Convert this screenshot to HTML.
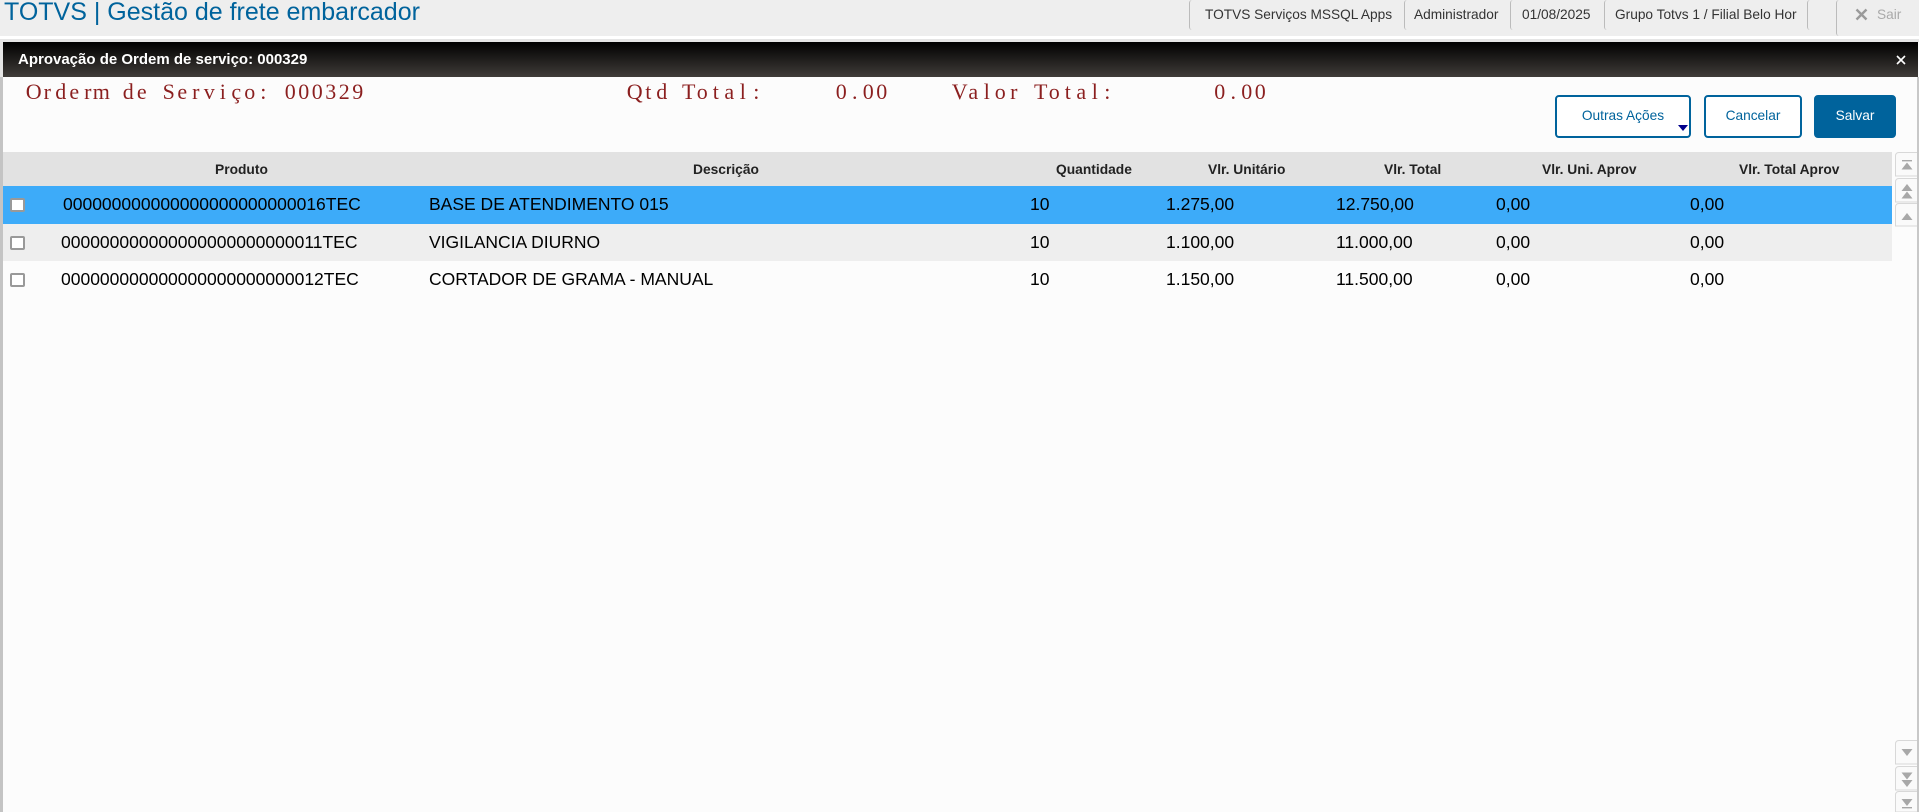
<!DOCTYPE html>
<html lang="pt-BR">
<head>
<meta charset="utf-8">
<title>TOTVS | Gestão de frete embarcador</title>
<style>
html,body{margin:0;padding:0;width:1919px;height:812px;overflow:hidden;background:#fcfcfc;font-family:"Liberation Sans",sans-serif;}
.a{position:absolute;white-space:nowrap;}
.b{position:absolute;}
.nav{font-size:13.7px;color:#333;top:7px;line-height:16px;}
.div{position:absolute;top:0;width:6px;height:30px;border-left:1px solid #bbb;border-radius:5px;box-sizing:border-box;}
.th{font-weight:bold;font-size:13.8px;color:#222;top:162px;line-height:16px;}
.td{font-size:17.5px;color:#000;line-height:20px;}
.cb{position:absolute;left:10px;width:15px;height:14px;box-sizing:border-box;background:#fff;border:2px solid #999;border-radius:2px;}
.btn{position:absolute;top:95px;height:43px;box-sizing:border-box;border:2px solid #00639c;border-radius:4px;background:#fff;color:#00639c;font-size:13.7px;line-height:38px;text-align:center;}
</style>
</head>
<body>
<div class="b" style="left:0;top:0;width:1919px;height:36px;background:#eee;"></div>
<div class="b" style="left:0;top:36px;width:1919px;height:3px;background:#fff;"></div>
<div class="b" style="left:0;top:39px;width:1919px;height:3px;background:#e5e5e5;"></div>
<div class="b" style="left:0;top:42px;width:3px;height:35px;background:#e5e5e5;"></div>
<div class="b" style="left:0;top:77px;width:3px;height:735px;background:#c4c4c4;"></div>
<div class="b" style="left:1917px;top:77px;width:2px;height:735px;background:#c8c8c8;"></div>

<div class="a" style="left:4px;top:-2.5px;font-size:25px;line-height:28px;color:#00639c;">TOTVS | Gestão de frete embarcador</div>

<div class="div" style="left:1189px;"></div>
<div class="a nav" style="left:1205px;">TOTVS Serviços MSSQL Apps</div>
<div class="div" style="left:1404px;"></div>
<div class="a nav" style="left:1414px;">Administrador</div>
<div class="div" style="left:1510px;"></div>
<div class="a nav" style="left:1522px;">01/08/2025</div>
<div class="div" style="left:1604px;"></div>
<div class="a nav" style="left:1615px;">Grupo Totvs 1 / Filial Belo Hor</div>
<div class="div" style="left:1807px;"></div>
<div class="div" style="left:1836px;height:36px;"></div>
<svg class="b" style="left:1855px;top:8px;" width="13" height="13" viewBox="0 0 13 13"><path d="M1.5 1.5L11.5 11.5M11.5 1.5L1.5 11.5" stroke="#9a9a9a" stroke-width="2.4" fill="none"/></svg>
<div class="a nav" style="left:1877px;color:#aaa;">Sair</div>

<div class="b" style="left:3px;top:42px;width:1915px;height:35px;background:linear-gradient(#000,#403c39);"></div>
<div class="a" style="left:18px;top:52px;font-size:15px;font-weight:bold;line-height:16px;color:#fff;">Aprovação de Ordem de serviço: 000329</div>
<svg class="b" style="left:1896px;top:55px;" width="10" height="10" viewBox="0 0 10 10"><path d="M1 1L9 9M9 1L1 9" stroke="#fff" stroke-width="1.6" fill="none"/></svg>

<svg class="b" style="left:0;top:75px;" width="1300" height="36" viewBox="0 75 1300 36">
<g font-family="'Liberation Serif',serif" font-size="22" fill="#8b1f1f" text-anchor="middle">
<text y="99" x="33.75 47.25 60.75 74.25 87.75 101.25 114.75 128.25 141.75 155.25 168.75 182.25 195.75 209.25 222.75 236.25 249.75 263.25 276.75 290.25 303.75 317.25 330.75 344.25 357.75">Orderm de Serviço: 000329</text>
<text y="99" x="634.75 648.25 661.75 675.25 688.75 702.25 715.75 729.25 742.75 756.25">Qtd Total:</text>
<text y="99" x="841.25 854.75 868.25 881.75">0.00</text>
<text y="99" x="959.75 973.25 986.75 1000.25 1013.75 1027.25 1040.75 1054.25 1067.75 1081.25 1094.75 1107.25">Valor Total:</text>
<text y="99" x="1219.75 1233.25 1246.75 1260.25">0.00</text>
</g>
</svg>

<div class="btn" style="left:1555px;width:136px;">Outras Ações</div>
<svg class="b" style="left:1678px;top:125px;" width="10" height="6" viewBox="0 0 10 6"><path d="M0 0H10L5 6Z" fill="#00008b"/></svg>
<div class="btn" style="left:1704px;width:98px;">Cancelar</div>
<div class="btn" style="left:1814px;width:82px;background:#00639c;color:#fff;">Salvar</div>

<div class="b" style="left:3px;top:152px;width:1889px;height:34px;background:#e2e2e2;"></div>
<div class="b" style="left:3px;top:186px;width:1889px;height:38px;background:#3dabf9;"></div>
<div class="b" style="left:3px;top:224px;width:1889px;height:37px;background:#eee;"></div>

<div class="a th" style="left:215px;">Produto</div>
<div class="a th" style="left:693px;">Descrição</div>
<div class="a th" style="left:1056px;">Quantidade</div>
<div class="a th" style="left:1208px;">Vlr. Unitário</div>
<div class="a th" style="left:1384px;">Vlr. Total</div>
<div class="a th" style="left:1542px;">Vlr. Uni. Aprov</div>
<div class="a th" style="left:1739px;">Vlr. Total Aprov</div>

<div class="cb" style="top:198px;"></div>
<div class="a td" style="left:63px;top:194px;">000000000000000000000000016TEC</div>
<div class="a td" style="left:429px;top:194px;">BASE DE ATENDIMENTO 015</div>
<div class="a td" style="left:1030px;top:194px;">10</div>
<div class="a td" style="left:1166px;top:194px;">1.275,00</div>
<div class="a td" style="left:1336px;top:194px;">12.750,00</div>
<div class="a td" style="left:1496px;top:194px;">0,00</div>
<div class="a td" style="left:1690px;top:194px;">0,00</div>

<div class="cb" style="top:236px;"></div>
<div class="a td" style="left:61px;top:232px;">000000000000000000000000011TEC</div>
<div class="a td" style="left:429px;top:232px;">VIGILANCIA DIURNO</div>
<div class="a td" style="left:1030px;top:232px;">10</div>
<div class="a td" style="left:1166px;top:232px;">1.100,00</div>
<div class="a td" style="left:1336px;top:232px;">11.000,00</div>
<div class="a td" style="left:1496px;top:232px;">0,00</div>
<div class="a td" style="left:1690px;top:232px;">0,00</div>

<div class="cb" style="top:273px;"></div>
<div class="a td" style="left:61px;top:269px;">000000000000000000000000012TEC</div>
<div class="a td" style="left:429px;top:269px;">CORTADOR DE GRAMA - MANUAL</div>
<div class="a td" style="left:1030px;top:269px;">10</div>
<div class="a td" style="left:1166px;top:269px;">1.150,00</div>
<div class="a td" style="left:1336px;top:269px;">11.500,00</div>
<div class="a td" style="left:1496px;top:269px;">0,00</div>
<div class="a td" style="left:1690px;top:269px;">0,00</div>

<svg class="b" style="left:0;top:0;" width="1919" height="812" viewBox="0 0 1919 812">
<g fill="#fafafa" stroke="#d8d8d8" stroke-width="1">
<path d="M1917 152.5H1899Q1895.5 152.5 1895.5 156V176H1917"/>
<path d="M1917 178.5H1899Q1895.5 178.5 1895.5 182V202H1917"/>
<path d="M1917 203.5H1899Q1895.5 203.5 1895.5 207V226H1917"/>
<path d="M1917 740.5H1899Q1895.5 740.5 1895.5 744V764H1917"/>
<path d="M1917 766.5H1899Q1895.5 766.5 1895.5 770V790H1917"/>
<path d="M1917 791.5H1899Q1895.5 791.5 1895.5 795V812H1917"/>
</g>
<g fill="#a8a8a8">
<rect x="1902" y="160" width="10" height="1.4"/>
<path d="M1907 162.5L1912.5 169.5H1901.5Z"/>
<path d="M1907 184L1912.5 191H1901.5Z"/>
<path d="M1907 191.5L1912.5 198.5H1901.5Z"/>
<path d="M1907 213L1912.5 220H1901.5Z"/>
<path d="M1901.5 749H1912.5L1907 756Z"/>
<path d="M1901.5 772.5H1912.5L1907 779.5Z"/>
<path d="M1901.5 780H1912.5L1907 787Z"/>
<path d="M1901.5 799H1912.5L1907 806Z"/>
<rect x="1902" y="807" width="10" height="1.4"/>
</g>
</svg>
</body>
</html>
